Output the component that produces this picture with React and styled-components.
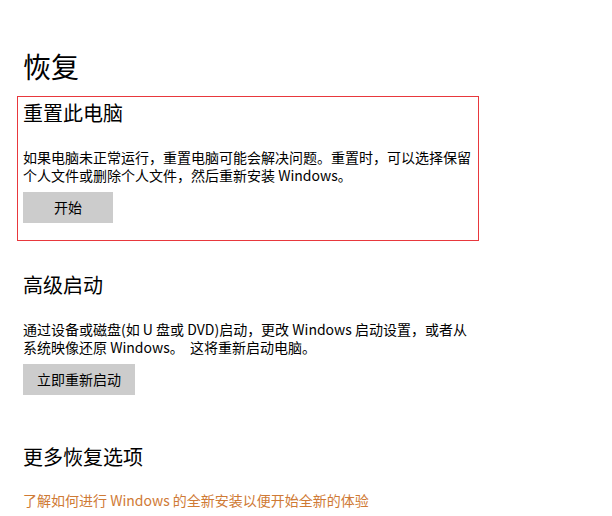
import React from "react";
import styled, { createGlobalStyle } from "styled-components";

const GlobalStyle = createGlobalStyle`
  html, body {
    margin: 0;
    padding: 0;
    background: #fff;
  }
  body {
    font-family: "Noto Sans CJK SC", "Noto Sans", sans-serif;
    color: #000;
  }
`;

const sections = [
  {
    title: "重置此电脑",
    text: "如果电脑未正常运行，重置电脑可能会解决问题。重置时，可以选择保留个人文件或删除个人文件，然后重新安装 Windows。",
    button: "开始",
    highlighted: true
  },
  {
    title: "高级启动",
    text: "通过设备或磁盘(如 U 盘或 DVD)启动，更改 Windows 启动设置，或者从系统映像还原 Windows。\u00a0 这将重新启动电脑。",
    button: "立即重新启动"
  }
];

export default function App() {
  return (
    <>
      <GlobalStyle />
      <Page>
        <Title>恢复</Title>
        {sections.map(s => (
          <Section key={s.title} highlighted={s.highlighted}>
            <Heading>{s.title}</Heading>
            <Description>{s.text}</Description>
            <ActionButton>{s.button}</ActionButton>
          </Section>
        ))}
        <Section>
          <Heading>更多恢复选项</Heading>
          <LinkText href="#">了解如何进行 Windows 的全新安装以便开始全新的体验</LinkText>
        </Section>
      </Page>
    </>
  );
}

const Page = styled.div`
  display: flex;
  flex-direction: column;
  align-items: flex-start;
  padding: 48px 0 0 17px;
`;

const Title = styled.h1`
  margin: 0 0 12px 6px;
  font-size: 28px;
  line-height: 36px;
  font-weight: 400;
`;

const Section = styled.section.withConfig({
  shouldForwardProp: p => p !== "highlighted"
})`
  box-sizing: border-box;
  width: 462px;
  display: flex;
  flex-direction: column;
  align-items: flex-start;
  padding: 2px 5px 17px;
  border: 1px solid ${props => (props.highlighted ? "#e8383d" : "transparent")};

  & + & {
    margin-top: 27px;
  }
`;

const Heading = styled.h2`
  margin: 0 0 21px;
  font-size: 20px;
  line-height: 28px;
  font-weight: 400;
`;

const Description = styled.p`
  margin: 0 0 8px;
  font-size: 14px;
  line-height: 18px;
  width: 452px;
`;

const ActionButton = styled.button.attrs({ type: "button" })`
  min-width: 90px;
  height: 31px;
  padding: 0 14px;
  border: none;
  background: #cccccc;
  color: #000;
  font-family: inherit;
  font-size: 14px;
  line-height: 31px;
  cursor: pointer;
`;

const LinkText = styled.a`
  margin-top: -1px;
  font-size: 14px;
  line-height: 18px;
  color: #cf7a35;
  text-decoration: none;
`;
